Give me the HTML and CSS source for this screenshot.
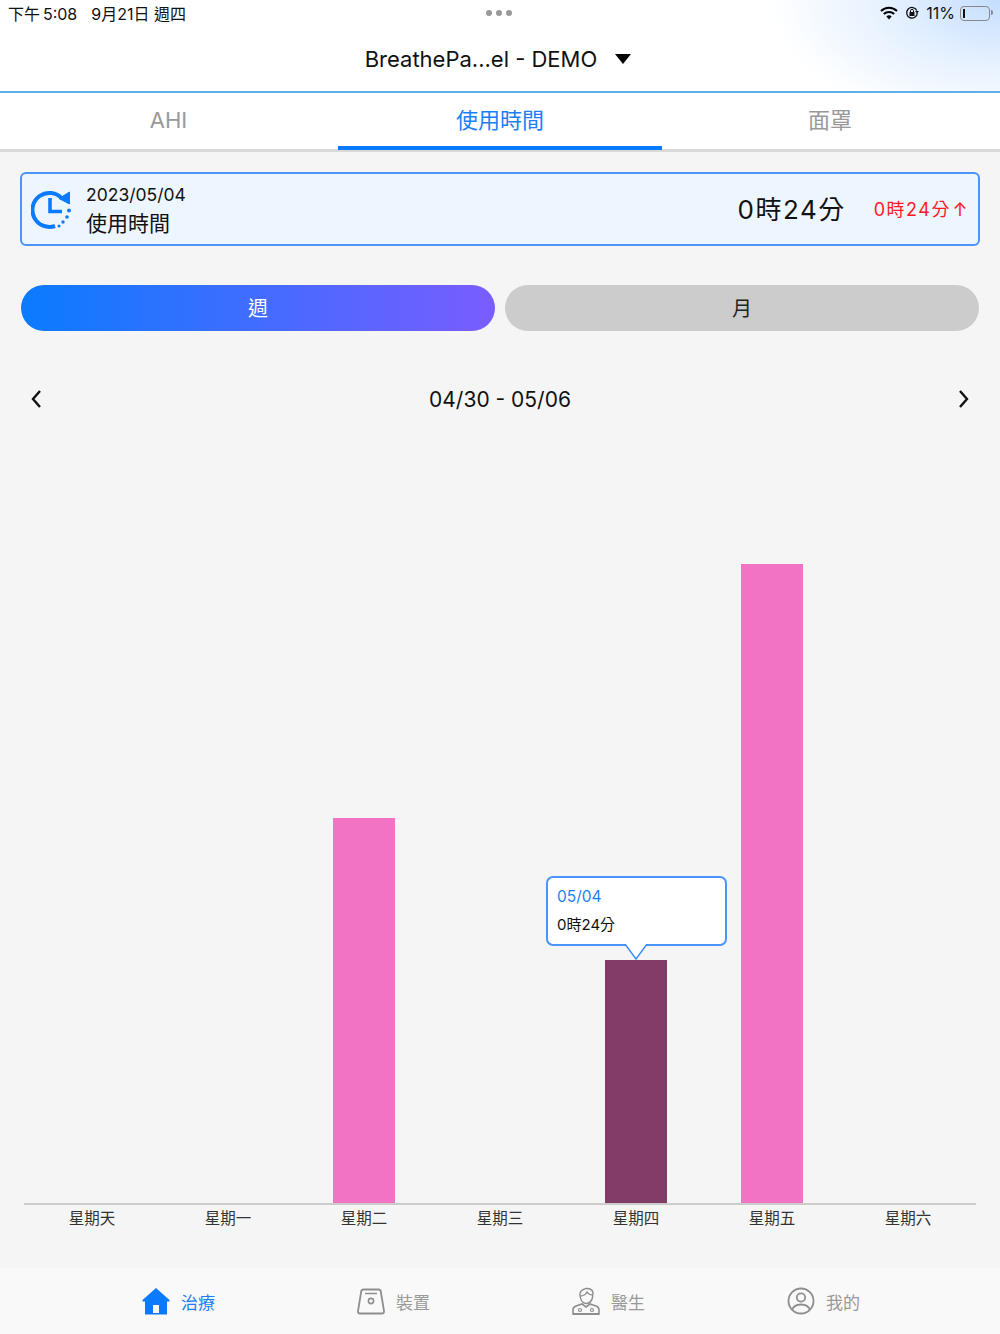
FILE: index.html
```html
<!DOCTYPE html>
<html lang="zh-Hant">
<head>
    <meta charset="UTF-8">
    <meta name="viewport" content="width=device-width, initial-scale=1.0">
    <title>使用時間</title>
    <link rel="stylesheet" href="styles.css">
</head>
<body>
    <div class="app">
        <!-- Status bar and device title -->
        <header class="top">
            <div class="status-bar">
                <span class="status-time"><span>下午&#8201;5:08</span><span>9月21日 週四</span></span>
                <span class="status-dots"><i></i><i></i><i></i></span>
                <span class="status-right">
                    <svg class="wifi" width="18" height="14" viewBox="0 0 18 14">
                        <path d="M1 5a11.500 11.500 0 0 1 16 0" fill="none" stroke="#000" stroke-width="2"/>
                        <path d="M3.800 8a7.500 7.500 0 0 1 10.400 0" fill="none" stroke="#000" stroke-width="2"/>
                        <path d="M6.300 10.500a3.800 3.800 0 0 1 5.400 0L9 13.500z" fill="#000"/>
                    </svg>
                    <svg class="lock" width="14" height="14" viewBox="0 0 14 14">
                        <path d="M11.800 4.500A5.300 5.300 0 1 0 12.300 7" fill="none" stroke="#111" stroke-width="1.300"/>
                        <path d="M10 5h4l-2 2.500z" fill="#111"/>
                        <rect x="4.500" y="6" width="5" height="4" fill="#111"/>
                        <path d="M5.500 6V4.800a1.500 1.500 0 0 1 3 0V6" fill="none" stroke="#111"/>
                    </svg>
                    <span class="battery-text">11%</span>
                    <span class="battery"><span class="battery-level"></span></span>
                </span>
            </div>
            <div class="device-title">
                <span>BreathePa...el - DEMO</span>
                <span class="caret"></span>
            </div>
        </header>

        <nav class="tabs">
            <a class="tab">AHI</a>
            <a class="tab active">使用時間</a>
            <a class="tab">面罩</a>
        </nav>

        <main class="content">
            <section class="summary">
                <svg class="summary-icon" width="42" height="42" viewBox="0 0 42 42">
                    <path d="M31 10.500A17 17 0 1 0 24 38" fill="none" stroke="#0a7bff" stroke-width="4"/>
                    <path d="M38.500 4L38.500 16L28 10.500z" fill="#0a7bff" stroke="#0a7bff"/>
                    <path d="M19 10v13.500h12" fill="none" stroke="#0a7bff" stroke-width="3.600"/>
                    <circle cx="38" cy="22.500" r="2" fill="#0a7bff"/>
                    <circle cx="36" cy="29" r="1.800" fill="#0a7bff"/>
                    <circle cx="32" cy="34" r="1.700" fill="#0a7bff"/>
                    <circle cx="28" cy="38" r="1.500" fill="#0a7bff"/>
                </svg>
                <div class="summary-label">
                    <div class="summary-date">2023/05/04</div>
                    <div class="summary-name">使用時間</div>
                </div>
                <div class="summary-value">0時24分</div>
                <div class="summary-change">0時24分 ↑</div>
            </section>

            <div class="range-switch">
                <button class="range-btn active">週</button>
                <button class="range-btn">月</button>
            </div>

            <div class="date-nav">
                <svg width="12" height="20" viewBox="0 0 12 20"><path d="M10 2L3 10l7 8" fill="none" stroke="#111" stroke-width="2.400"/></svg>
                <span>04/30 - 05/06</span>
                <svg width="12" height="20" viewBox="0 0 12 20"><path d="M2 2l7 8-7 8" fill="none" stroke="#111" stroke-width="2.400"/></svg>
            </div>

            <div class="chart">
                <div class="bars">
                    <div class="bar-col"></div>
                    <div class="bar-col"></div>
                    <div class="bar-col"><div class="bar" style="height: 385px"></div></div>
                    <div class="bar-col"></div>
                    <div class="bar-col">
                        <div class="bar selected" style="height: 243px">
                            <div class="tooltip">
                                <div class="tooltip-date">05/04</div>
                                <div class="tooltip-value">0時24分</div>
                                <svg class="tooltip-arrow" width="24" height="16" viewBox="0 0 24 16">
                                    <path d="M1 0L12 15L23 0" fill="#fff" stroke="#3f8ffb" stroke-width="1.500"/>
                                </svg>
                            </div>
                        </div>
                    </div>
                    <div class="bar-col"><div class="bar" style="height: 639px"></div></div>
                    <div class="bar-col"></div>
                </div>
                <div class="days">
                    <span>星期天</span>
                    <span>星期一</span>
                    <span>星期二</span>
                    <span>星期三</span>
                    <span>星期四</span>
                    <span>星期五</span>
                    <span>星期六</span>
                </div>
            </div>
        </main>

        <footer class="tabbar">
            <a class="tabbar-item active">
                <svg width="28" height="28" viewBox="0 0 28 28">
                    <path d="M14 1L0.500 13v1.500H3V27.500H25V14.500h2.500V13z M11 18h6v8h-6z" fill="#0a7bff" fill-rule="evenodd"/>
                </svg>
                <span>治療</span>
            </a>
            <a class="tabbar-item">
                <svg width="28" height="28" viewBox="0 0 28 28">
                    <path d="M6.500 2.500h15q2 0 2.300 2L27 24q.2 2.500-2 2.500H3Q.8 26.500 1 24L4.200 4.500q.3-2 2.300-2z" fill="none" stroke="#8e8e8e" stroke-width="1.800"/>
                    <path d="M8 6.500h12" stroke="#8e8e8e" stroke-width="1.500"/>
                    <circle cx="14" cy="14" r="2.600" fill="none" stroke="#8e8e8e" stroke-width="1.600"/>
                </svg>
                <span>裝置</span>
            </a>
            <a class="tabbar-item">
                <svg width="28" height="28" viewBox="0 0 28 28">
                    <path d="M8 9q-1-6 6-7.500 6-.5 7 4l-.5 5q-1 5.500-6.500 6-5-.5-6-7.500z" fill="none" stroke="#8e8e8e" stroke-width="1.400"/>
                    <path d="M8 9q5 0 7-4 2 3 5.500 3" fill="none" stroke="#8e8e8e" stroke-width="1.300"/>
                    <path d="M1 27v-4q0-3 3-4l6-2 4 3 4-3 6 2q3 1 3 4v4z" fill="none" stroke="#8e8e8e" stroke-width="1.600"/>
                    <path d="M1 27h26" stroke="#8e8e8e" stroke-width="2"/>
                    <circle cx="8" cy="23" r="1.500" fill="none" stroke="#8e8e8e" stroke-width="1.200"/>
                    <circle cx="20" cy="23" r="1.500" fill="none" stroke="#8e8e8e" stroke-width="1.200"/>
                </svg>
                <span>醫生</span>
            </a>
            <a class="tabbar-item">
                <svg width="28" height="28" viewBox="0 0 28 28">
                    <circle cx="14" cy="14" r="12.500" fill="none" stroke="#8e8e8e" stroke-width="1.800"/>
                    <circle cx="14" cy="10.500" r="4.200" fill="none" stroke="#8e8e8e" stroke-width="1.800"/>
                    <path d="M5 23q2-5.500 9-5.500t9 5.500" fill="none" stroke="#8e8e8e" stroke-width="1.800"/>
                </svg>
                <span>我的</span>
            </a>
        </footer>
    </div>
</body>
</html>
```

FILE: styles.css
```css
/* Global Styles */
body {
    margin: 0;
    background-color: #f5f5f5;
    font-family: Inter, "Noto Sans CJK TC", sans-serif;
    color: #111;
}

.app {
    width: 1000px;
    height: 1334px;
    display: flex;
    flex-direction: column;
    overflow: hidden;
}

/* Status bar and title */
.top {
    height: 93px;
    box-sizing: border-box;
    background: radial-gradient(ellipse 230px 125px at 100% 0, #c4deff 0%, #e6f1ff 50%, #ffffff 100%);
    border-bottom: 2px solid #5fb0ea;
}

.status-bar {
    height: 26px;
    padding: 0 10px 0 8px;
    display: flex;
    align-items: center;
    justify-content: space-between;
    font-size: 16px;
    position: relative;
}

.status-time {
    display: flex;
    gap: 14px;
}

.status-dots {
    display: flex;
    gap: 4px;
    position: absolute;
    left: 486px;
    top: 10px;
}

.status-dots i {
    width: 6px;
    height: 6px;
    border-radius: 50%;
    background-color: #999;
}

.status-right {
    display: flex;
    align-items: center;
    gap: 7px;
}

.battery-text {
    margin-right: -2px;
}

.battery {
    width: 30px;
    height: 15px;
    border: 1px solid #888;
    border-radius: 4px;
    padding: 2px;
    box-sizing: border-box;
    display: flex;
    position: relative;
}

/* Battery nub */
.battery::after {
    content: "";
    position: absolute;
    right: -4px;
    top: 3px;
    width: 2px;
    height: 5px;
    border-radius: 0 2px 2px 0;
    background-color: #888;
}

.battery-level {
    width: 2px;
    background-color: #111;
}

.device-title {
    height: 64px;
    display: flex;
    align-items: center;
    justify-content: center;
    gap: 18px;
    font-size: 22px;
    padding-right: 4px;
    margin-top: 1px;
}

.caret {
    width: 0;
    height: 0;
    border-left: 8.500px solid transparent;
    border-right: 8.500px solid transparent;
    border-top: 10px solid #000;
}

/* Tabs */
.tabs {
    height: 59px;
    box-sizing: border-box;
    display: flex;
    background-color: #fff;
    border-bottom: 3px solid #d9d9d9;
}

.tab {
    flex: 1;
    text-align: center;
    line-height: 54px;
    font-size: 22px;
    color: #999;
    height: 57px;
    box-sizing: border-box;
}

.tab:last-child {
    text-indent: -3px;
}

.tab.active {
    flex: 0 0 324px;
    margin: 0 1px;
    color: #1a7ff5;
    border-bottom: 4px solid #0a7bff;
}

/* Page content */
.content {
    flex: 1;
    padding: 20px 20px 0;
    display: flex;
    flex-direction: column;
}

.summary {
    height: 74px;
    box-sizing: border-box;
    display: flex;
    align-items: center;
    background-color: #edf5ff;
    border: 2px solid #4a95fb;
    border-radius: 6px;
    padding: 0 9px 0 9px;
}

.summary-icon {
    margin-right: 13px;
}

.summary-label {
    flex: 1;
}

.summary-date {
    font-size: 17.500px;
    line-height: 28px;
    margin-top: 1px;
}

.summary-name {
    font-size: 21px;
    line-height: 30px;
}

.summary-value {
    font-size: 26px;
    letter-spacing: 1.500px;
    margin-right: 28px;
    padding-bottom: 4px;
}

.summary-change {
    font-size: 18px;
    letter-spacing: 1.500px;
    word-spacing: -5px;
    color: #fb1a25;
    padding-bottom: 2px;
}

.range-switch {
    display: flex;
    gap: 10px;
    padding: 0 1px;
    margin-top: 39px;
}

.range-btn {
    flex: 1;
    height: 46px;
    border: none;
    border-radius: 23px;
    background-color: #cccccc;
    color: #222;
    font-family: inherit;
    font-size: 20px;
    padding-bottom: 3px;
}

.range-btn.active {
    background: linear-gradient(90deg, #0a7bff 0%, #7b5cff 100%);
    color: #fff;
}

.date-nav {
    display: flex;
    align-items: center;
    justify-content: space-between;
    padding: 0 10px;
    margin-top: 54px;
    height: 28px;
    font-size: 21px;
}

/* Chart */
.chart {
    flex: 1;
    display: flex;
    flex-direction: column;
    padding: 0 4px;
}

.bars {
    flex: 1;
    display: grid;
    grid-template-columns: repeat(7, 136px);
    align-items: end;
    border-bottom: 2px solid #cccccc;
}

.bar-col {
    display: flex;
    justify-content: center;
    align-items: flex-end;
}

.bar {
    width: 62px;
    background-color: #f272c4;
    position: relative;
}

.bar.selected {
    background-color: #823c68;
}

.tooltip {
    position: absolute;
    left: -59px;
    bottom: calc(100% + 14px);
    width: 181px;
    height: 70px;
    box-sizing: border-box;
    padding: 7px 9px;
    background-color: #fff;
    border: 2px solid #4a95fb;
    border-radius: 7px;
}

.tooltip-arrow {
    position: absolute;
    left: 76px;
    bottom: -16px;
}

.tooltip-date {
    font-size: 15.500px;
    line-height: 24px;
    color: #1a7ff5;
}

.tooltip-value {
    font-size: 15px;
    line-height: 32px;
}

.days {
    display: grid;
    grid-template-columns: repeat(7, 136px);
    height: 63px;
    padding-top: 4px;
    box-sizing: border-box;
    text-align: center;
    font-size: 15.500px;
    color: #333;
    line-height: 20px;
}

/* Bottom tab bar */
.tabbar {
    height: 66px;
    background-color: #f9f9f9;
    display: grid;
    grid-template-columns: repeat(4, 215px);
    padding-left: 71px;
}

.tabbar-item {
    display: flex;
    align-items: center;
    justify-content: center;
    gap: 11px;
    font-size: 17px;
    color: #9a9a9a;
}

.tabbar-item.active {
    color: #1a7ff5;
}
```
